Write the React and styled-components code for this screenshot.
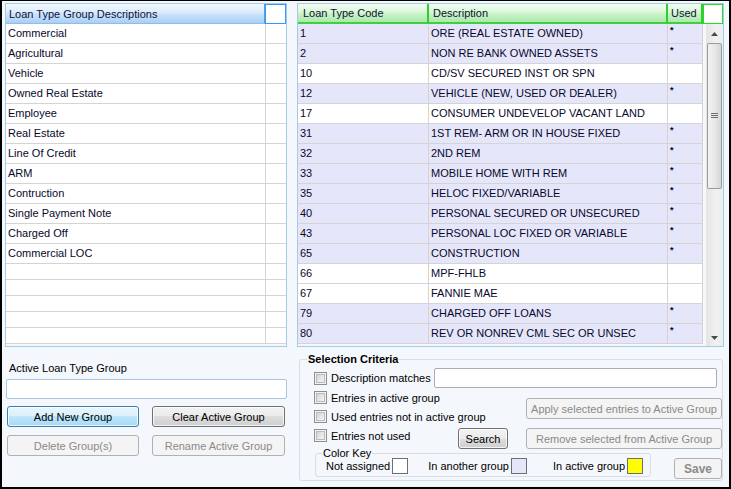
import React from 'react';
import styled, { createGlobalStyle, css } from 'styled-components';

const GlobalStyle = createGlobalStyle`
  html, body { margin: 0; padding: 0; background: #fff; }
  body { font-family: "Liberation Sans", Arial, sans-serif; font-size: 11px; color: #000; }
  * { box-sizing: border-box; }
`;

const Window = styled.div`
  width: 731px;
  height: 489px;
  border: 2px solid #000;
  border-top-width: 1px;
  background: #f4f7fc;
  display: flex;
  gap: 10px;
  padding: 2px 5px 0 3px;
`;

const Column = styled.div`
  width: ${p => p.$w}px;
  display: flex;
  flex-direction: column;
`;

/* ---------- grids ---------- */

const Grid = styled.div`
  height: 344px;
  border: 1px solid #a3cbe4;
  background: #f4f7fc;
  display: flex;
  flex-direction: column;
  overflow: hidden;
`;

const HeadRow = styled.div`
  display: flex;
  height: 20px;
  flex: none;
`;

const BlueHead = styled.div`
  width: ${p => p.$w}px;
  height: 20px;
  line-height: 20px;
  padding-left: 3px;
  color: #10103a;
  background: linear-gradient(to bottom, #f3f9fe 0%, #deedfc 40%, #c6e0fa 60%, #a9cff5 100%);
  border-bottom: 1px solid #8fbde9;
  border-right: 1px solid #5c9ee0;
`;

const GreenHead = styled.div`
  width: ${p => p.$w}px;
  height: 20px;
  line-height: 19px;
  padding-left: ${p => p.$pad ?? 4}px;
  color: #101030;
  background: linear-gradient(to bottom, #f2fdf2 0%, #ddf8dd 40%, #c4f1c4 60%, #ace9ac 100%);
  border-bottom: 2px solid #3fd03f;
  border-right: 2px solid #2ecf2e;
`;

const Corner = styled.div`
  width: ${p => p.$w}px;
  height: 20px;
  background: #fff;
  border: 1px solid ${p => p.$c};
`;

const Row = styled.div`
  display: flex;
  flex: none;
  height: ${p => p.$h}px;
  background: ${p => p.$bg};
  border-bottom: 1px solid #d4d4d4;
`;

const Cell = styled.div`
  width: ${p => p.$w}px;
  line-height: 19px;
  padding-left: 2px;
  white-space: nowrap;
  overflow: hidden;
  color: #08082a;
  ${p => p.$line && css`border-right: 1px solid #d4d4d4;`}
`;

const Star = styled.span`
  display: inline-block;
  vertical-align: top;
  font-size: 9px;
  line-height: 13px;
  font-weight: bold;
`;

const Body = styled.div`
  display: flex;
  height: 322px;
`;

const RowsCol = styled.div`
  width: 405px;
  display: flex;
  flex-direction: column;
`;

/* ---------- scrollbar ---------- */

const ScrollBar = styled.div`
  width: 20px;
  padding-left: 2px;
  display: flex;
  flex-direction: column;
`;

const Track = styled.div`
  flex: 1;
  background: linear-gradient(to right, #e4e4e4, #f1f1f1 60%, #ececec);
  border-left: 1px solid #f7f7f7;
  display: flex;
  flex-direction: column;
`;

const ArrowBox = styled.div`
  height: ${p => p.$h}px;
  display: flex;
  align-items: center;
  justify-content: center;
  flex: none;
`;

const Thumb = styled.div`
  width: 15px;
  height: 146px;
  margin-left: 1px;
  border: 1px solid #9b9b9b;
  border-radius: 2px;
  background: linear-gradient(to right, #f3f3f3, #e8e8e8 50%, #d6d6d6);
  display: flex;
  align-items: center;
  justify-content: center;
`;

const Spacer = styled.div`
  flex: 1;
`;

/* ---------- form controls ---------- */

const FieldLabel = styled.div`
  margin: 15px 0 0 4px;
  height: 13px;
  line-height: 13px;
`;

const TextBox = styled.div`
  width: ${p => p.$w}px;
  height: 20px;
  margin: ${p => p.$m || 0};
  background: #fff;
  border: 1px solid ${p => p.$b || '#abadb3'};
  border-radius: 2px;
  flex: none;
`;

const ButtonRow = styled.div`
  display: flex;
  gap: 13px;
  margin: ${p => p.$mt}px 0 0 2px;
`;

const Button = styled.button`
  width: ${p => p.$w}px;
  height: 21px;
  padding: 0;
  font-family: inherit;
  font-size: ${p => (p.$bold ? 12 : 11)}px;
  font-weight: ${p => (p.$bold ? 'bold' : 'normal')};
  border-radius: 3px;
  flex: none;
  color: #000;
  border: 1px solid #707070;
  box-shadow: inset 0 0 0 1px rgba(255, 255, 255, 0.75);
  background: linear-gradient(to bottom, #f2f2f2 0%, #ebebeb 50%, #dddddd 50%, #cfcfcf 100%);
  ${p => p.$focus && css`
    border-color: #3c7fb1;
    background: linear-gradient(to bottom, #eaf6fd 0%, #d9f0fc 50%, #bee6fd 50%, #a7d9f5 100%);
  `}
  &:disabled {
    border-color: #adb2b5;
    background: #f4f4f4;
    color: #8a8a8a;
    box-shadow: none;
  }
`;

const Group = styled.fieldset`
  margin: ${p => p.$m};
  padding: ${p => p.$p};
  width: ${p => p.$w}px;
  border: 1px solid #d5dfe5;
  border-radius: 3px;
  min-width: 0;
  flex: none;
`;

const Legend = styled.legend`
  margin-left: ${p => p.$ml}px;
  padding: 0 1px;
  line-height: 14px;
  font-weight: ${p => (p.$bold ? 'bold' : 'normal')};
  font-size: 11px;
`;

const Line = styled.div`
  display: flex;
  align-items: ${p => p.$align || 'center'};
  height: ${p => p.$h}px;
  margin-top: ${p => p.$mt || 0}px;
`;

const CheckItem = styled.label`
  display: flex;
  align-items: center;
  gap: 4px;
  width: ${p => p.$w}px;
  height: 19px;
  flex: none;
`;

const Check = styled.span`
  width: 13px;
  height: 13px;
  flex: none;
  border: 1px solid #8e8f8f;
  background: linear-gradient(135deg, #c9c9c9 0%, #e6e6e6 50%, #f8f8f8 100%);
  box-shadow: inset 0 0 0 1px #f3f3f3, inset 0 0 0 2px #b9bcbf;
`;

const Middle = styled.div`
  display: flex;
  align-items: flex-start;
`;

const Stack = styled.div`
  display: flex;
  flex-direction: column;
  width: ${p => p.$w}px;
  gap: ${p => p.$gap || 0}px;
  margin-top: ${p => p.$mt || 0}px;
`;

const SearchWrap = styled.div`
  margin-top: 2px;
`;

const BottomLine = styled.div`
  display: flex;
  align-items: flex-start;
  margin-top: -3px;
  margin-left: 1px;
`;

const KeyRow = styled.div`
  display: flex;
  align-items: center;
  height: 18px;
  margin-top: -3px;
  padding-left: 10px;
`;

const KeyItem = styled.div`
  display: flex;
  align-items: center;
  gap: 2px;
  margin-left: ${p => p.$ml}px;
`;

const Swatch = styled.span`
  width: 16px;
  height: 16px;
  border: 1px solid #6f6f6f;
  background: ${p => p.$c};
`;

const SaveWrap = styled.div`
  margin: 12px 0 0 auto;
`;

/* ---------- data ---------- */

const groups = [
  'Commercial', 'Agricultural', 'Vehicle', 'Owned Real Estate', 'Employee', 'Real Estate',
  'Line Of Credit', 'ARM', 'Contruction', 'Single Payment Note', 'Charged Off', 'Commercial LOC',
];

const loanTypes = [
  ['1', 'ORE (REAL ESTATE OWNED)', true],
  ['2', 'NON RE BANK OWNED ASSETS', true],
  ['10', 'CD/SV SECURED INST OR SPN', false],
  ['12', 'VEHICLE (NEW, USED OR DEALER)', true],
  ['17', 'CONSUMER UNDEVELOP VACANT LAND', false],
  ['31', '1ST REM- ARM OR IN HOUSE FIXED', true],
  ['32', '2ND REM', true],
  ['33', 'MOBILE HOME WITH REM', true],
  ['35', 'HELOC FIXED/VARIABLE', true],
  ['40', 'PERSONAL SECURED OR UNSECURED', true],
  ['43', 'PERSONAL LOC FIXED OR VARIABLE', true],
  ['65', 'CONSTRUCTION', true],
  ['66', 'MPF-FHLB', false],
  ['67', 'FANNIE MAE', false],
  ['79', 'CHARGED OFF LOANS', true],
  ['80', 'REV OR NONREV CML SEC OR UNSEC', true],
];

const Arrow = ({ down }) => (
  <svg width="7" height="4" viewBox="0 0 7 4">
    <polygon points={down ? '0,0 7,0 3.5,4' : '0,4 7,4 3.5,0'} fill="#4a4a4a" />
  </svg>
);

const Gripper = () => (
  <svg width="7" height="6" viewBox="0 0 7 6">
    <path d="M0 0.5H7M0 2.5H7M0 4.5H7" stroke="#6f6f6f" strokeWidth="1" />
  </svg>
);

export default function App() {
  return (
    <>
      <GlobalStyle />
      <Window>
        <Column $w={282}>
          <Grid>
            <HeadRow>
              <BlueHead $w={259}>Loan Type Group Descriptions</BlueHead>
              <Corner $w={21} $c="#3399ff" />
            </HeadRow>
            {groups.map(g => (
              <Row key={g} $h={20} $bg="#fff">
                <Cell $w={260} $line>{g}</Cell>
                <Cell $w={20} />
              </Row>
            ))}
            {[0, 1, 2, 3, 4].map(i => (
              <Row key={i} $h={16} $bg="#fff">
                <Cell $w={260} $line />
                <Cell $w={20} />
              </Row>
            ))}
          </Grid>

          <FieldLabel>Active Loan Type Group</FieldLabel>
          <TextBox $w={281} $m="4px 0 0 1px" $b="#a9c6e2" />
          <ButtonRow $mt={7}>
            <Button $w={132} $focus>Add New Group</Button>
            <Button $w={133}>Clear Active Group</Button>
          </ButtonRow>
          <ButtonRow $mt={8}>
            <Button $w={132} disabled>Delete Group(s)</Button>
            <Button $w={133} disabled>Rename Active Group</Button>
          </ButtonRow>
        </Column>

        <Column $w={427}>
          <Grid>
            <HeadRow>
              <GreenHead $w={131} $pad={5}>Loan Type Code</GreenHead>
              <GreenHead $w={239}>Description</GreenHead>
              <GreenHead $w={35} $pad={3}>Used</GreenHead>
              <Corner $w={20} $c="#22dd22" />
            </HeadRow>
            <Body>
              <RowsCol>
                {loanTypes.map(([code, desc, used]) => (
                  <Row key={code} $h={20} $bg={used ? '#e6e6fa' : '#fff'}>
                    <Cell $w={131} $line>{code}</Cell>
                    <Cell $w={239} $line>{desc}</Cell>
                    <Cell $w={35} $line>{used && <Star>*</Star>}</Cell>
                  </Row>
                ))}
              </RowsCol>
              <ScrollBar>
                <Track>
                  <ArrowBox $h={19}><Arrow /></ArrowBox>
                  <Thumb><Gripper /></Thumb>
                  <Spacer />
                  <ArrowBox $h={17}><Arrow down /></ArrowBox>
                </Track>
              </ScrollBar>
            </Body>
          </Grid>

          <Group $m="5px 1px 0 2px" $p="0 0 1px 14px" $w={424}>
            <Legend $ml={-7} $bold>Selection Criteria</Legend>
            <Line $h={20} $mt={2}>
              <CheckItem $w={120}><Check />Description matches</CheckItem>
              <TextBox $w={283} />
            </Line>
            <Middle>
              <Stack $w={212}>
                <CheckItem $w={212}><Check />Entries in active group</CheckItem>
                <CheckItem $w={212}><Check />Used entries not in active group</CheckItem>
                <Line $h={21} $align="flex-start">
                  <CheckItem $w={144}><Check />Entries not used</CheckItem>
                  <SearchWrap><Button $w={50}>Search</Button></SearchWrap>
                </Line>
              </Stack>
              <Stack $w={196} $gap={9} $mt={10}>
                <Button $w={196} disabled>Apply selected entries to Active Group</Button>
                <Button $w={196} disabled>Remove selected from Active Group</Button>
              </Stack>
            </Middle>
            <BottomLine>
              <Group $m="0" $p="0 0 1px 0" $w={336}>
                <Legend $ml={6}>Color Key</Legend>
                <KeyRow>
                  <KeyItem $ml={0}>Not assigned<Swatch $c="#fff" /></KeyItem>
                  <KeyItem $ml={20}>In another group<Swatch $c="#e6e6fa" /></KeyItem>
                  <KeyItem $ml={26}>In active group<Swatch $c="#ffff00" /></KeyItem>
                </KeyRow>
              </Group>
              <SaveWrap><Button $w={48} $bold disabled>Save</Button></SaveWrap>
            </BottomLine>
          </Group>
        </Column>
      </Window>
    </>
  );
}
